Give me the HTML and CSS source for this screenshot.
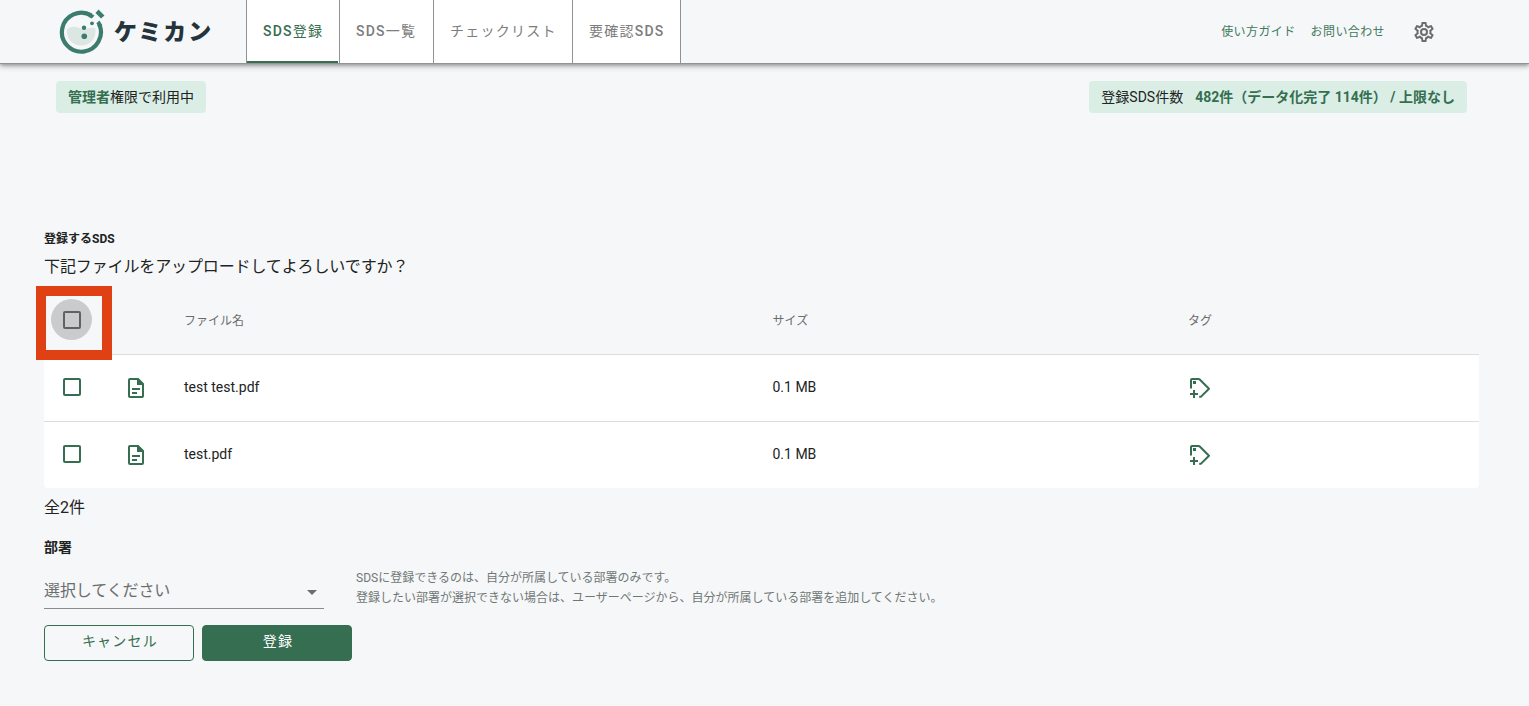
FILE: index.html
```html
<!DOCTYPE html>
<html lang="ja">
<head>
<meta charset="utf-8">
<title>ケミカン</title>
<link rel="stylesheet" href="styles.css">
</head>
<body>
<header class="header">
  <a class="logo">
    <svg class="logo-mark" viewBox="0 0 48 48">
      <path fill="#dce7e4" d="M10 21.500C13 17.500 19 18.500 24 20.500C30 22 35 18 38.500 21C39.500 29.500 34 37.500 24.500 37.500C15 37.500 9 30.500 10 21.500Z"/>
      <path fill="none" stroke="#3c7c6c" stroke-width="4.200" d="M34.300 7.400A19.500 19.500 0 1 0 42 15.800"/>
      <path fill="#3c7c6c" d="M32.500 4.700L37.500 7.500L34.800 10.500L31.500 9ZM42.400 12.500L45.500 17.500L41.500 18.500L39.400 15.300ZM41.500 1.500L47.500 7.500L44 10.500L38.500 5Z"/>
      <g fill="#3c7c6c"><circle cx="35" cy="15.300" r="1.900"/><circle cx="27" cy="19.700" r="2.200"/><circle cx="27.300" cy="28.300" r="2.800"/></g>
    </svg>
    <span class="logo-name">ケミカン</span>
  </a>
  <nav class="tabs">
    <a class="tab tab-upload active">SDS<span>登録</span></a>
    <a class="tab tab-list">SDS<span>一覧</span></a>
    <a class="tab tab-check"><span>チェックリスト</span></a>
    <a class="tab tab-review"><span>要確認</span>SDS</a>
  </nav>
  <div class="links">
    <a>使い方ガイド</a>
    <a>お問い合わせ</a>
    <svg class="gear" viewBox="0 0 24 24"><path fill="#6b6d6d" d="M12,8A4,4 0 0,1 16,12A4,4 0 0,1 12,16A4,4 0 0,1 8,12A4,4 0 0,1 12,8M12,10A2,2 0 0,0 10,12A2,2 0 0,0 12,14A2,2 0 0,0 14,12A2,2 0 0,0 12,10M10,22C9.75,22 9.54,21.82 9.5,21.58L9.13,18.93C8.5,18.68 7.96,18.34 7.44,17.94L4.95,18.95C4.73,19.03 4.46,18.95 4.34,18.73L2.34,15.27C2.21,15.05 2.27,14.78 2.46,14.63L4.57,12.97L4.5,12L4.57,11L2.46,9.37C2.27,9.22 2.21,8.95 2.34,8.73L4.34,5.27C4.46,5.05 4.73,4.96 4.95,5.05L7.44,6.05C7.96,5.66 8.5,5.32 9.13,5.07L9.5,2.42C9.54,2.18 9.75,2 10,2H14C14.25,2 14.46,2.18 14.5,2.42L14.87,5.07C15.5,5.32 16.04,5.66 16.56,6.05L19.05,5.05C19.27,4.96 19.54,5.05 19.66,5.27L21.66,8.73C21.79,8.95 21.73,9.22 21.54,9.37L19.43,11L19.5,12L19.43,13L21.54,14.63C21.73,14.78 21.79,15.05 21.66,15.27L19.66,18.73C19.54,18.95 19.27,19.04 19.05,18.95L16.56,17.95C16.04,18.34 15.5,18.68 14.87,18.93L14.5,21.58C14.46,21.82 14.25,22 14,22H10M11.25,4L10.88,6.61C9.68,6.86 8.62,7.5 7.85,8.39L5.44,7.35L4.69,8.65L6.8,10.2C6.4,11.37 6.4,12.64 6.8,13.8L4.68,15.36L5.43,16.66L7.86,15.62C8.63,16.5 9.68,17.14 10.87,17.38L11.24,20H12.76L13.13,17.39C14.32,17.14 15.37,16.5 16.14,15.62L18.57,16.66L19.32,15.36L17.2,13.81C17.6,12.64 17.6,11.37 17.2,10.2L19.31,8.65L18.56,7.35L16.15,8.39C15.38,7.5 14.32,6.86 13.12,6.62L12.75,4H11.25Z"/></svg>
  </div>
</header>

<div class="status">
  <div class="chip"><p><b>管理者</b>権限で利用中</p></div>
  <div class="chip chip-count"><span>登録SDS件数</span><b>482件（データ化完了 114件） / 上限なし</b></div>
</div>

<main class="main">
  <h2 class="caption">登録するSDS</h2>
  <p class="question">下記ファイルをアップロードしてよろしいですか？</p>

  <div class="table">
    <div class="row head">
      <div class="ripple"><span class="checkbox"></span></div>
      <span></span>
      <span>ファイル名</span><span>サイズ</span><span>タグ</span>
      <div class="highlight"></div>
    </div>
    <div class="row">
      <span class="checkbox"></span>
      <svg class="icon" viewBox="0 0 24 24"><path fill="none" stroke="#356e50" stroke-width="2" d="M14 3H6Q5 3 5 4V20Q5 21 6 21H18Q19 21 19 20V8"/><path fill="#356e50" d="M13 2H14.500L20 7.500V9H13ZM8 12H16V14H8ZM8 16H13V18H8Z"/></svg>
      <span>test test.pdf</span><span>0.1 MB</span>
      <svg class="icon" viewBox="0 0 24 24"><path fill="none" stroke="#356e50" stroke-width="2" stroke-linejoin="round" d="M3 12.500V4Q3 3 4 3H10.500Q11.300 3 12 3.700L21 12.700L13.300 20.400Q12.600 21 11.200 20.800"/><path fill="#356e50" d="M5 5H8V8H5ZM5 14H7V17H10V19H7V22H5V19H2V17H5Z"/></svg>
    </div>
    <div class="row">
      <span class="checkbox"></span>
      <svg class="icon" viewBox="0 0 24 24"><path fill="none" stroke="#356e50" stroke-width="2" d="M14 3H6Q5 3 5 4V20Q5 21 6 21H18Q19 21 19 20V8"/><path fill="#356e50" d="M13 2H14.500L20 7.500V9H13ZM8 12H16V14H8ZM8 16H13V18H8Z"/></svg>
      <span>test.pdf</span><span>0.1 MB</span>
      <svg class="icon" viewBox="0 0 24 24"><path fill="none" stroke="#356e50" stroke-width="2" stroke-linejoin="round" d="M3 12.500V4Q3 3 4 3H10.500Q11.300 3 12 3.700L21 12.700L13.300 20.400Q12.600 21 11.200 20.800"/><path fill="#356e50" d="M5 5H8V8H5ZM5 14H7V17H10V19H7V22H5V19H2V17H5Z"/></svg>
    </div>
  </div>

  <p class="total">全2件</p>
  <h3 class="label">部署</h3>
  <div class="department">
    <div class="select"><span>選択してください</span><i class="arrow"></i></div>
    <p class="note">SDSに登録できるのは、自分が所属している部署のみです。<br>登録したい部署が選択できない場合は、ユーザーページから、自分が所属している部署を追加してください。</p>
  </div>
  <div class="actions">
    <button class="button outlined">キャンセル</button>
    <button class="button filled">登録</button>
  </div>
</main>
</body>
</html>
```
FILE: styles.css
```css
* { box-sizing: border-box; }
body {
  margin: 0;
  height: 706px;
  overflow: hidden;
  background: #f6f7f9;
  color: #212322;
  font-family: Roboto, "Noto Sans CJK JP", sans-serif;
  font-size: 14px;
  line-height: 20px;
}
p, h2, h3 { margin: 0; }
.header {
  position: relative;
  display: flex;
  height: 63px;
  background: #f6f7f9;
  box-shadow: 0 1px 0 #929394, 0 2px 4px rgba(0,0,0,.35), 0 4px 6px rgba(0,0,0,.16);
}
.logo { display: flex; align-items: center; width: 246px; padding-left: 57px; }
.logo-mark { width: 48px; height: 48px; flex: none; }
.logo-name {
  padding: 3px 0 0 9px;
  font-size: 23px;
  line-height: 36px;
  font-weight: 900;
  letter-spacing: 2px;
  color: #24343a;
  white-space: nowrap;
}
.tabs { display: flex; background: #fff; border-right: 1px solid #919293; }
.tab {
  display: flex;
  align-items: center;
  padding: 0 0 2px 16px;
  border-left: 1px solid #919293;
  color: #7c7d7d;
  font-weight: 500;
  letter-spacing: 1.25px;
  white-space: nowrap;
}
.tab span { font-weight: 400; }
.tab-upload { width: 93px; }
.tab-list { width: 94px; }
.tab-check { width: 139px; }
.tab-review { width: 108px; }
.active { color: #356e50; background: linear-gradient(#356e50, #356e50) left bottom / 91px 2px no-repeat; }
.links {
  display: flex;
  align-items: center;
  gap: 15px;
  margin-left: auto;
  margin-right: 93px;
  font-size: 12px;
  letter-spacing: .4px;
  color: #41795c;
}
.links a { margin: 0 1px 0 -1px; }
.gear { width: 24px; height: 24px; margin-left: 11px; margin-top: 1px; }
.status { display: flex; justify-content: space-between; padding: 18px 62px 0 56px; }
.chip {
  display: flex;
  gap: 12px;
  height: 32px;
  padding: 6px 12px;
  border-radius: 4px;
  background: #daeee6;
  white-space: nowrap;
}
.chip b { color: #356e50; font-weight: 700; }
.main { padding: 116px 50px 0 44px; }
.caption { font-size: 12px; line-height: 20px; font-weight: 700; }
.question { margin-top: 6px; font-size: 16px; line-height: 24px; letter-spacing: -.12px; }
.table { margin-top: 7px; }
.row {
  display: grid;
  grid-template-columns: 80px 60px 588.5px 415.5px 1fr;
  align-items: center;
  height: 67px;
  background: #fff;
  border-top: 1px solid #dcddde;
}
.row:last-child { border-radius: 0 0 4px 4px; }
.row > span:not(.checkbox) { padding-bottom: 2px; }
.head {
  position: relative;
  height: 68px;
  background: none;
  border: 0;
  font-size: 12px;
  color: #6b6d6d;
}
.head > span:not(.checkbox) { padding: 2px 0 0; }
.checkbox { width: 18px; height: 18px; margin: -3px 0 0 19px; border: 2px solid #356e50; border-radius: 2px; }
.ripple {
  display: flex;
  align-items: center;
  justify-content: center;
  width: 41px;
  height: 41px;
  margin: -1px 0 0 7.4px;
  border-radius: 50%;
  background: #cacbcc;
}
.ripple .checkbox { margin: 0; border-color: #606261; }
.highlight {
  position: absolute;
  left: -8px;
  top: 0;
  width: 76px;
  height: 74px;
  border: 10px solid #df4014;
}
.icon { width: 24px; height: 24px; margin-top: -1px; }
.total { margin-top: 8px; font-size: 16px; line-height: 24px; }
.label { margin-top: 17px; font-size: 14px; line-height: 20px; font-weight: 700; }
.department { display: flex; gap: 32px; margin-top: 10px; }
.select {
  display: flex;
  align-items: center;
  justify-content: space-between;
  width: 280px;
  height: 42px;
  padding: 7px 7px 0 0;
  border-bottom: 1px solid #8b8d8d;
  color: #6b6d6d;
  font-size: 16px;
  letter-spacing: -.1px;
}
.arrow { border: 5px solid transparent; border-top-color: #6b6d6d; border-bottom: 0; margin-top: 3px; }
.note { padding-top: 1px; font-size: 12px; line-height: 20px; color: #707875; }
.actions { display: flex; gap: 8px; margin-top: 16px; }
.button {
  width: 150px;
  height: 36px;
  padding: 0 0 6px 2px;
  border: 1px solid #356e50;
  border-radius: 4px;
  font-family: Roboto, "Noto Sans CJK JP", sans-serif;
  font-size: 14px;
  letter-spacing: 1.25px;
}
.outlined { background: transparent; color: #356e50; }
.filled { background: #356e50; color: #fff; }
```
